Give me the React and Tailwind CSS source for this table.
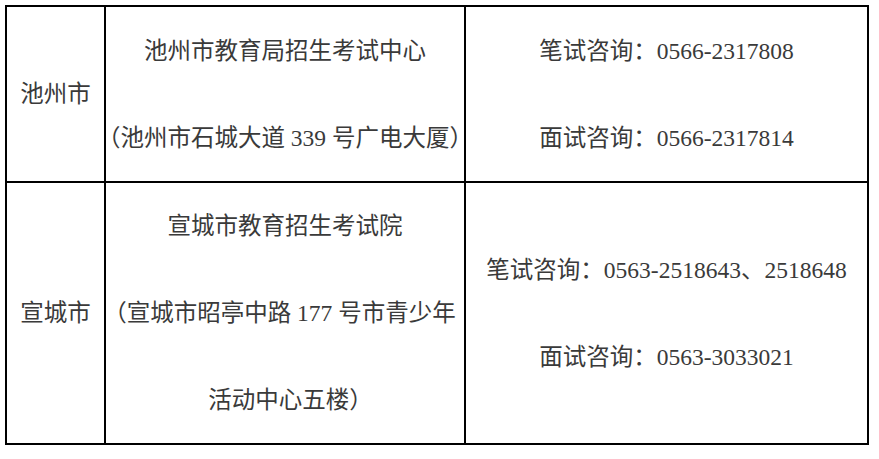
const rows = [
  {
    city: '池州市',
    office: [['池州市教育局招生考试中心'], ['（', '池州市石城大道 339 号广电大厦', '）']],
    phones: [['笔试咨询：0566-2317808'], ['面试咨询：0566-2317814']],
  },
  {
    city: '宣城市',
    office: [['宣城市教育招生考试院'], ['（', '宣城市昭亭中路 177 号市青少年'], ['活动中心五楼', '）']],
    phones: [['笔试咨询：0563-2518643、2518648'], ['面试咨询：0563-3033021']],
  },
]

// full-width brackets get their empty half trimmed, as Word compresses them
function Part({ text }) {
  if (text === '（') return <span className="-ml-[11px]">{text}</span>
  if (text === '）') return <span className="-mr-[11px]">{text}</span>
  return <span>{text}</span>
}

function Cell({ lines }) {
  return (
    <div className="bg-white flex flex-col items-center justify-center gap-[43px] text-center">
      {lines.map((parts, i) => (
        <div key={i} className="whitespace-nowrap leading-[44px]">
          {parts.map((p, j) => (
            <Part key={j} text={p} />
          ))}
        </div>
      ))}
    </div>
  )
}

export default function App() {
  return (
    <div className="w-[879px] h-[459px] bg-white pt-[5px] pl-[5px] font-['Liberation_Serif','Noto_Sans_CJK_SC',serif] text-[23.5px] text-[#3a3a3a]">
      <div className="w-[864px] bg-black p-[2px] grid grid-cols-[97px_358px_401px] grid-rows-[174px_260px] gap-[2px]">
        {rows.map((row) => [
          <Cell key={row.city + 'c'} lines={[[row.city]]} />,
          <Cell key={row.city + 'o'} lines={row.office} />,
          <Cell key={row.city + 'p'} lines={row.phones} />,
        ])}
      </div>
    </div>
  )
}
